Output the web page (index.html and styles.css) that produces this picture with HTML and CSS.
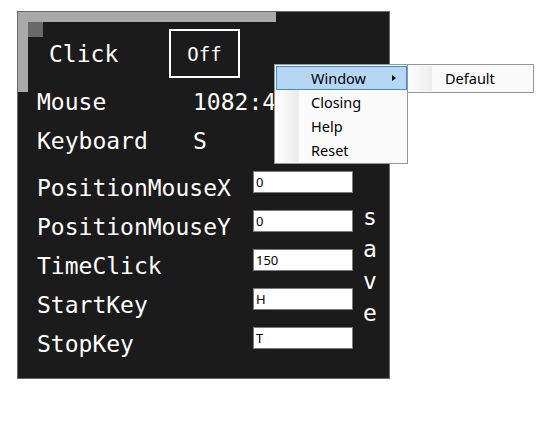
FILE: index.html
```html
<!DOCTYPE html>
<html>
<head>
<meta charset="utf-8">
<link rel="stylesheet" href="styles.css">
</head>
<body>
<div class="window">
  <div class="deco-top"></div>
  <div class="deco-left"></div>
  <div class="deco-square"></div>

  <div class="header">
    <span class="click-label">Click</span>
    <div class="toggle">Off</div>
  </div>

  <div class="info">
    <span>Mouse</span><span>1082:432</span>
    <span>Keyboard</span><span>S</span>
  </div>

  <div class="form">
    <span class="lbl">PositionMouseX</span><div class="field">0</div>
    <span class="lbl">PositionMouseY</span><div class="field">0</div>
    <span class="lbl">TimeClick</span><div class="field">150</div>
    <span class="lbl">StartKey</span><div class="field">H</div>
    <span class="lbl">StopKey</span><div class="field">T</div>
    <div class="save"><span>s</span><span>a</span><span>v</span><span>e</span></div>
  </div>
</div>

<div class="menu">
  <div class="gutter"></div>
  <div class="item active">Window<span class="arrow"></span></div>
  <div class="item">Closing</div>
  <div class="item">Help</div>
  <div class="item">Reset</div>
</div>

<div class="submenu">
  <div class="gutter"></div>
  <div class="item">Default</div>
</div>
</body>
</html>
```

FILE: styles.css
```css
html, body {
  margin: 0;
  padding: 0;
  background: #ffffff;
}

body {
  position: relative;
  width: 547px;
  height: 430px;
  overflow: hidden;
}

.window {
  position: relative;
  margin: 11px 0 0 17px;
  border: 1px solid #6a6a6a;
  background: #1b1b1b;
  padding: 17px 0 0 19px;
  box-sizing: content-box;
  width: 352px;
  height: 349px;
  color: #ffffff;
  font-family: "DejaVu Sans Mono", monospace;
  font-size: 23px;
}

.deco-top {
  position: absolute;
  left: 0;
  top: 0;
  width: 258px;
  height: 10px;
  background: #a9a9a9;
}

.deco-left {
  position: absolute;
  left: 0;
  top: 0;
  width: 10px;
  height: 80px;
  background: #a9a9a9;
}

.deco-square {
  position: absolute;
  left: 10px;
  top: 10px;
  width: 15px;
  height: 15px;
  background: #696969;
}

.header {
  display: flex;
  align-items: center;
  height: 49px;
}

.click-label {
  margin-left: 12px;
  width: 120px;
}

.toggle {
  width: 71px;
  height: 49px;
  box-sizing: border-box;
  border: 2px solid #ffffff;
  display: flex;
  align-items: center;
  justify-content: center;
  font-size: 19px;
}

.info {
  display: grid;
  grid-template-columns: 156px auto;
  grid-auto-rows: 39px;
  line-height: 39px;
  margin-top: 5px;
  white-space: nowrap;
}

.form {
  display: grid;
  grid-template-columns: 216px 100px 1fr;
  grid-auto-rows: 39px;
  line-height: 39px;
  margin-top: 8px;
}

.lbl {
  grid-column: 1;
  white-space: nowrap;
}

.field {
  grid-column: 2;
  align-self: start;
  margin-top: 2px;
  height: 22px;
  box-sizing: border-box;
  border: 1px solid #7a7a7a;
  background: #ffffff;
  color: #000000;
  font-family: "Noto Sans", sans-serif;
  font-size: 13px;
  line-height: 20px;
  padding-left: 2px;
}

.save {
  grid-column: 3;
  grid-row: 1 / span 5;
  align-self: center;
  display: flex;
  flex-direction: column;
  padding-left: 10px;
  line-height: 32px;
  margin-top: -4px;
}

.menu {
  position: absolute;
  left: 274px;
  top: 64px;
  width: 134px;
  box-sizing: border-box;
  border: 1px solid #979797;
  background: #fbfbfb;
  padding: 1px 0 1px 1px;
  font-family: "Noto Sans", sans-serif;
  font-size: 14.5px;
  color: #000000;
}

.submenu {
  position: absolute;
  left: 407px;
  top: 64px;
  width: 127px;
  box-sizing: border-box;
  border: 1px solid #979797;
  background: #fbfbfb;
  padding: 1px 0 2px 1px;
  font-family: "Noto Sans", sans-serif;
  font-size: 14.5px;
  color: #000000;
}

.gutter {
  position: absolute;
  left: 1px;
  top: 1px;
  bottom: 1px;
  width: 23px;
  background: linear-gradient(to right, #fdfdfd, #ececec);
}

.item {
  position: relative;
  height: 24px;
  line-height: 22px;
  padding-left: 34px;
  box-sizing: border-box;
  border: 1px solid transparent;
  white-space: nowrap;
}

.submenu .item {
  padding-left: 35px;
}

.item.active {
  background: #b5d7f3;
  border-color: #3d8ee0;
}

.arrow {
  position: absolute;
  right: 10px;
  top: 8px;
  width: 0;
  height: 0;
  border-top: 3.5px solid transparent;
  border-bottom: 3.5px solid transparent;
  border-left: 4px solid #000000;
}
```
